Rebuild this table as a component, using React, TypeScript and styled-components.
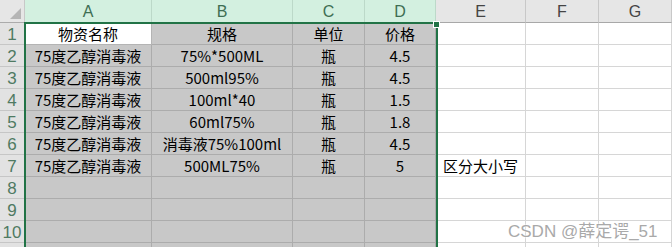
import React from "react";
import styled, { createGlobalStyle, css } from "styled-components";

const GlobalStyle = createGlobalStyle`
  html, body {
    margin: 0;
    padding: 0;
    background: #ffffff;
  }
  body {
    font-family: "Noto Sans CJK SC", "Noto Sans", sans-serif;
  }
`;

const COLS = [
  { key: "A", width: 127, selected: true },
  { key: "B", width: 141, selected: true },
  { key: "C", width: 72, selected: true },
  { key: "D", width: 71, selected: true },
  { key: "E", width: 90, selected: false },
  { key: "F", width: 73, selected: false },
  { key: "G", width: 73, selected: false },
];

const ROWS: string[][] = [
  ["物资名称", "规格", "单位", "价格", "", "", ""],
  ["75度乙醇消毒液", "75%*500ML", "瓶", "4.5", "", "", ""],
  ["75度乙醇消毒液", "500ml95%", "瓶", "4.5", "", "", ""],
  ["75度乙醇消毒液", "100ml*40", "瓶", "1.5", "", "", ""],
  ["75度乙醇消毒液", "60ml75%", "瓶", "1.8", "", "", ""],
  ["75度乙醇消毒液", "消毒液75%100ml", "瓶", "4.5", "", "", ""],
  ["75度乙醇消毒液", "500ML75%", "瓶", "5", "区分大小写", "", ""],
  ["", "", "", "", "", "", ""],
  ["", "", "", "", "", "", ""],
  ["", "", "", "", "", "", ""],
  ["", "", "", "", "", "", ""],
];

// only rows 1..10 show their number, row 11 is just peeking in at the bottom edge
const VISIBLE_LABELS = 10;

const Sheet = styled.div`
  position: relative;
  width: 672px;
  height: 247px;
  overflow: hidden;
  background: #ffffff;
`;

const Grid = styled.div`
  display: grid;
  grid-template-columns: 25px ${COLS.map((c) => `${c.width}px`).join(" ")};
  grid-template-rows: 23px repeat(${ROWS.length}, 22px);
`;

const Corner = styled.div`
  position: relative;
  background: #e6e6e6;
  border-right: 1px solid #c8c8c8;
  border-bottom: 1px solid #ababab;
  box-sizing: border-box;
  &::after {
    content: "";
    position: absolute;
    right: 3px;
    bottom: 3px;
    border-left: 11px solid transparent;
    border-bottom: 11px solid #b5b5b5;
  }
`;

const ColHead = styled.div<{ $sel: boolean }>`
  display: flex;
  align-items: center;
  justify-content: center;
  box-sizing: border-box;
  font-family: "Liberation Sans", "Noto Sans", sans-serif;
  font-size: 16px;
  padding-top: 1px;
  ${({ $sel }) =>
    $sel
      ? css`
          background: #d3f0e0;
          color: #3e6e53;
          border-right: 1px solid #bcd9c9;
          border-bottom: 1px solid #217346;
        `
      : css`
          background: #e6e6e6;
          color: #444444;
          border-right: 1px solid #c8c8c8;
          border-bottom: 1px solid #a8a8a8;
        `}
`;

const RowHead = styled.div`
  display: flex;
  align-items: center;
  justify-content: center;
  box-sizing: border-box;
  background: #e2e2e2;
  color: #4f7a62;
  font-family: "Liberation Sans", "Noto Sans", sans-serif;
  font-size: 17px;
  padding-top: 2px;
  border-right: 1px solid #c0c0c0;
  border-bottom: 1px solid #c6c6c6;
`;

const Cell = styled.div<{ $sel: boolean; $active?: boolean; $left?: boolean }>`
  display: flex;
  align-items: center;
  justify-content: ${({ $left }) => ($left ? "flex-start" : "center")};
  padding: 0 ${({ $left }) => ($left ? "7px" : "0")};
  box-sizing: border-box;
  font-size: 15px;
  color: #000000;
  white-space: nowrap;
  ${({ $sel, $active }) =>
    $active
      ? css`
          background: #ffffff;
          border-right: 1px solid #b4b4b4;
          border-bottom: 1px solid #b4b4b4;
        `
      : $sel
      ? css`
          background: #c8c8c8;
          border-right: 1px solid #acacac;
          border-bottom: 1px solid #acacac;
        `
      : css`
          background: #ffffff;
          border-right: 1px solid #d6d6d6;
          border-bottom: 1px solid #d6d6d6;
        `}
`;

const Selection = styled.div`
  position: absolute;
  left: 24px;
  top: 22px;
  width: 414px;
  height: 240px;
  box-sizing: border-box;
  border: 2px solid #217346;
  pointer-events: none;
`;

const Handle = styled.div`
  position: absolute;
  left: 434px;
  top: 22px;
  width: 5px;
  height: 5px;
  background: #217346;
  outline: 1px solid #ffffff;
`;

const Watermark = styled.div`
  position: absolute;
  left: 508px;
  top: 217px;
  font-family: "Liberation Sans", "Noto Sans CJK SC", sans-serif;
  font-size: 17px;
  color: #a9a9a9;
  white-space: nowrap;
  text-shadow: 0 0 2px #ffffff, 0 0 2px #ffffff;
`;

export default function App() {
  return (
    <>
      <GlobalStyle />
      <Sheet>
        <Grid>
          <Corner />
          {COLS.map((c) => (
            <ColHead key={c.key} $sel={c.selected}>
              {c.key}
            </ColHead>
          ))}
          {ROWS.map((row, r) => (
            <React.Fragment key={r}>
              <RowHead>{r < VISIBLE_LABELS ? r + 1 : ""}</RowHead>
              {row.map((v, c) => (
                <Cell
                  key={c}
                  $sel={COLS[c].selected}
                  $active={r === 0 && c === 0}
                  $left={c === 4}
                >
                  {v}
                </Cell>
              ))}
            </React.Fragment>
          ))}
        </Grid>
        <Selection />
        <Handle />
        <Watermark>CSDN @薛定谔_51</Watermark>
      </Sheet>
    </>
  );
}
